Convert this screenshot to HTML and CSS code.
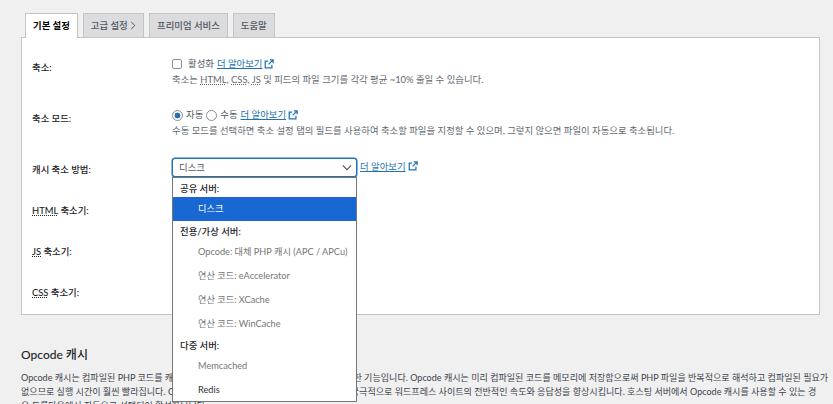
FILE: index.html
```html
<!DOCTYPE html>
<html lang="ko">
<head>
<meta charset="utf-8">
<title>축소 설정</title>
<link rel="stylesheet" href="styles.css">
</head>
<body>
<main class="page">
  <nav class="tabs">
    <a class="tab tab-active">기본 설정</a>
    <a class="tab">고급 설정 <svg class="chev" viewBox="0 0 6 10" width="6" height="9"><path d="M1 1l4 4-4 4" fill="none" stroke="#50575e" stroke-width="1.1"/></svg></a>
    <a class="tab">프리미엄 서비스</a>
    <a class="tab">도움말</a>
  </nav>
  <section class="panel">
    <div class="row row-tall">
      <div class="label">축소:</div>
      <div class="field">
        <div class="line"><span class="check"></span><span class="opt-text">활성화</span> <a class="link">더 알아보기</a><svg class="ext" viewBox="0 0 12 12" width="10" height="10"><path d="M9.5 7v3.5h-8v-8H5M7 1h4v4M11 1L5.5 6.5" fill="none" stroke="#2271b1" stroke-width="1.5"/></svg></div>
        <div class="hint">축소는 <abbr>HTML</abbr>, <abbr>CSS</abbr>, <abbr>JS</abbr> 및 피드의 파일 크기를 각각 평균 ~10% 줄일 수 있습니다.</div>
      </div>
    </div>
    <div class="row row-tall">
      <div class="label">축소 모드:</div>
      <div class="field">
        <div class="line"><span class="radio radio-on"></span><span class="radio-text">자동</span><span class="radio"></span><span class="radio-text">수동</span> <a class="link">더 알아보기</a><svg class="ext" viewBox="0 0 12 12" width="10" height="10"><path d="M9.5 7v3.5h-8v-8H5M7 1h4v4M11 1L5.5 6.5" fill="none" stroke="#2271b1" stroke-width="1.5"/></svg></div>
        <div class="hint">수동 모드를 선택하면 축소 설정 탭의 필드를 사용하여 축소할 파일을 지정할 수 있으며, 그렇지 않으면 파일이 자동으로 축소됩니다.</div>
      </div>
    </div>
    <div class="row">
      <div class="label">캐시 축소 방법:</div>
      <div class="field field-select">
        <div class="select-wrap">
          <div class="select">디스크<svg class="caret" viewBox="0 0 12 8" width="10" height="7"><path d="M1 1.5l5 5 5-5" fill="none" stroke="#50575e" stroke-width="1.4"/></svg></div>
          <ul class="menu">
            <li class="group">공유 서버:</li>
            <li class="item item-selected">디스크</li>
            <li class="group">전용/가상 서버:</li>
            <li class="item item-off">Opcode: 대체 PHP 캐시 (APC / APCu)</li>
            <li class="item item-off">연산 코드: eAccelerator</li>
            <li class="item item-off">연산 코드: XCache</li>
            <li class="item item-off">연산 코드: WinCache</li>
            <li class="group group-last">다중 서버:</li>
            <li class="item item-off">Memcached</li>
            <li class="item">Redis</li>
          </ul>
        </div>
        <a class="link">더 알아보기</a><svg class="ext" viewBox="0 0 12 12" width="10" height="10"><path d="M9.5 7v3.5h-8v-8H5M7 1h4v4M11 1L5.5 6.5" fill="none" stroke="#2271b1" stroke-width="1.5"/></svg>
      </div>
    </div>
    <div class="row"><div class="label"><abbr>HTML</abbr> 축소기:</div></div>
    <div class="row"><div class="label"><abbr>JS</abbr> 축소기:</div></div>
    <div class="row"><div class="label"><abbr>CSS</abbr> 축소기:</div></div>
  </section>
  <h2 class="heading">Opcode 캐시</h2>
  <p class="body-text">Opcode 캐시는 컴파일된 PHP 코드를 캐싱하여 웹사이트의 성능을 향상시키는 데 더 최적한 기능입니다. Opcode 캐시는 미리 컴파일된 코드를 메모리에 저장함으로써 PHP 파일을 반복적으로 해석하고 컴파일된 필요가<br>없으므로 실행 시간이 훨씬 빨라집니다. Opcode 캐시를 사용하면, 서버 부하를 크게 줄여 궁극적으로 워드프레스 사이트의 전반적인 속도와 응답성을 향상시킵니다. 호스팅 서버에서 Opcode 캐시를 사용할 수 있는 경<br>우 드롭다운에서 자동으로 선택되어 활성화됩니다.</p>
</main>
</body>
</html>
```
FILE: styles.css
```css
* { box-sizing: border-box; }
html, body { height: 100%; }
body {
  margin: 0;
  background: #f0f0f1;
  color: #1d2327;
  font: 9.4px/16px Lato, "Noto Sans CJK KR", sans-serif;
  overflow: hidden;
}
.page { padding: 13px 13px 0 21px; }
.tabs { display: flex; gap: 5px; padding-left: 4px; height: 24px; position: relative; z-index: 1; }
.tab {
  height: 24px;
  padding: 0 7px;
  border: 1px solid #c3c4c7;
  border-bottom: 0;
  background: #dcdcde;
  color: #50575e;
  font-weight: 500;
  line-height: 23px;
  white-space: nowrap;
}
.tab-active { background: #fff; color: #000; font-weight: 700; height: 25px; }
.chev { vertical-align: -1px; }
.panel {
  border: 1px solid #c3c4c7;
  background: #fff;
  padding: 9px 10px 2px;
  height: 278px;
}
.row { display: grid; grid-template-columns: 140px 1fr; height: 41px; }
.row-tall { height: 51px; }
.label { padding-top: 13px; font-weight: 500; white-space: nowrap; }
.field { padding-top: 9px; white-space: nowrap; }
.field-select { display: flex; align-items: flex-start; }
.line { display: flex; align-items: center; height: 16px; }
.hint { color: #646970; }
abbr { text-decoration: underline dotted; }
.check {
  width: 10px; height: 10px; margin-right: 6px;
  border: 1px solid #8c8f94; border-radius: 2px; background: #fff;
}
.opt-text { color: #50575e; margin-right: 3px; }
.radio {
  width: 11px; height: 11px; margin-right: 3px;
  border: 1px solid #8c8f94; border-radius: 50%; background: #fff;
}
.radio-on { background: radial-gradient(circle, #2271b1 0 2.7px, #fff 3.2px); }
.radio-text { color: #50575e; margin-right: 3px; }
.link { color: #2271b1; text-decoration: underline; }
.ext { margin-left: 2px; flex: none; }
.field-select .ext { margin-top: 3px; }
.field-select .link { line-height: 16px; margin-top: 1px; }
.select-wrap { position: relative; width: 185px; margin-right: 3px; }
.select {
  height: 19px;
  border: 1px solid #2271b1;
  border-radius: 3px;
  box-shadow: 0 0 0 .5px #2271b1;
  background: #fff;
  color: #50575e;
  padding-left: 6px;
  line-height: 17px;
  display: flex;
  justify-content: space-between;
  align-items: center;
}
.caret { margin-right: 4px; }
.menu {
  position: absolute;
  top: 19px; left: 0;
  width: 185px;
  height: 225px;
  margin: 0;
  padding: 0;
  overflow: hidden;
  list-style: none;
  background: #fff;
  border: 1px solid #767676;
  z-index: 5;
}
.group { height: 19px; padding-left: 7px; line-height: 21px; color: #1d2327; font-weight: 500; }
.group-last { height: 18px; line-height: 20px; }
.item { height: 24px; line-height: 24px; padding-left: 25px; color: #2c3338; font-size: 9.2px; white-space: nowrap; }
.item-selected { background: #1967d2; color: #fff; }
.item-off { color: #757575; }
.heading { margin: 32px 0 0; font-size: 12px; line-height: 16px; font-weight: 500; color: #1d2327; }
.body-text { margin: 8px 0 0; color: #3c434a; font-size: 9.05px; line-height: 14px; white-space: nowrap; }
```
